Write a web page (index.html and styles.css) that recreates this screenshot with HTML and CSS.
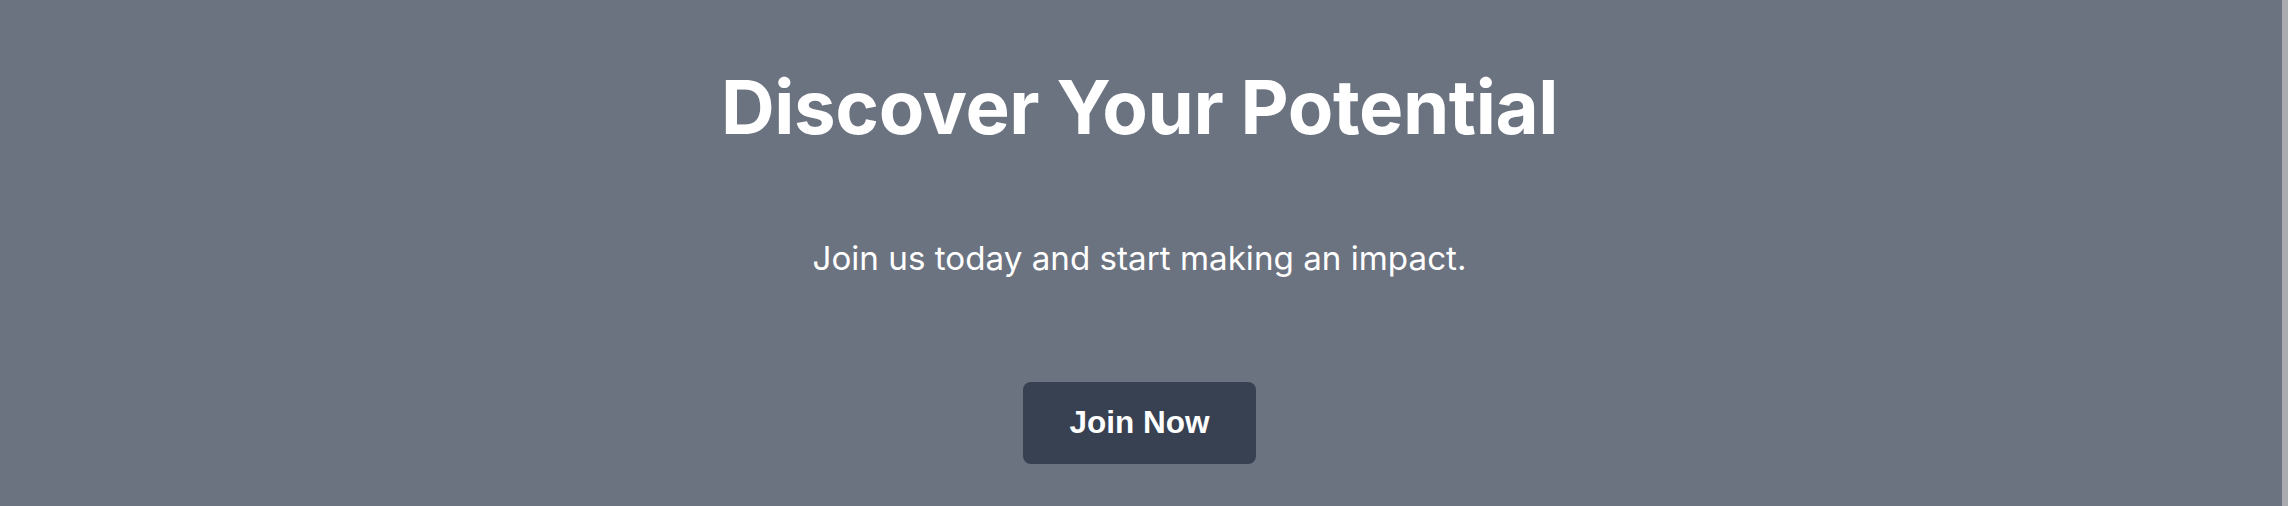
FILE: index.html
```html
<!DOCTYPE html>
<html lang="en">
<head>
<meta charset="utf-8">
<title>Discover Your Potential</title>
<link rel="stylesheet" href="styles.css">
</head>
<body>
<main class="hero">
  <h1 class="hero-title">Discover Your Potential</h1>
  <p class="hero-text">Join us today and start making an impact.</p>
  <button class="hero-button" type="button">Join Now</button>
</main>
</body>
</html>
```

FILE: styles.css
```css
html {
  background: #a9abae;
  height: 100%;
}
body {
  margin: 0 6px 0 0;
  min-height: 100%;
  background: #6b7280;
  font-family: Inter, "Noto Sans", sans-serif;
  color: #ffffff;
}
.hero {
  display: flex;
  flex-direction: column;
  align-items: center;
  padding-top: 70px;
  padding-right: 3px;
  min-height: 506px;
  box-sizing: border-box;
}
.hero-title {
  margin: 0;
  font-size: 74.4px;
  line-height: 1;
  font-weight: 700;
  letter-spacing: -0.4px;
}
.hero-text {
  margin: 90px 0 0;
  font-size: 33.2px;
  line-height: 1.5;
  font-weight: 400;
}
.hero-button {
  margin-top: 97.5px;
  height: 82px;
  width: 233px;
  padding: 0;
  border: 0;
  border-radius: 8px;
  background: #374151;
  color: #ffffff;
  font-family: "Liberation Sans", Arial, sans-serif;
  font-size: 31.5px;
  font-weight: 700;
  cursor: pointer;
}
```
